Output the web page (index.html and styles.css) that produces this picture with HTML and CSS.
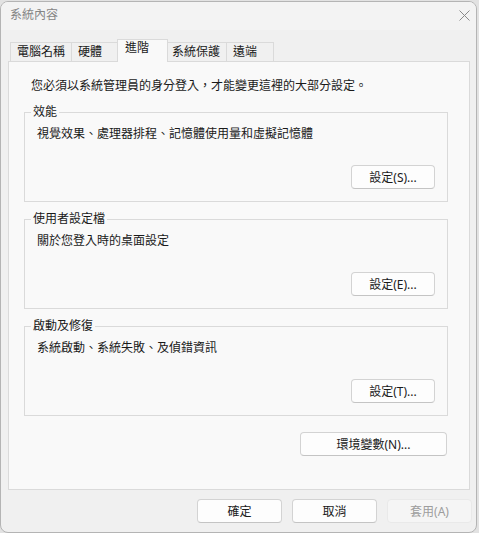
FILE: index.html
```html
<!DOCTYPE html>
<html lang="zh-Hant">
<head>
  <meta charset="UTF-8">
  <title>系統內容</title>
  <link rel="stylesheet" href="styles.css">
</head>
<body>
  <div class="window">
    <div class="titlebar">
      <span class="title">系統內容</span>
      <svg class="close" width="11" height="11" viewBox="0 0 11 11">
        <path d="M0.5 0.5 L10.5 10.5 M10.5 0.5 L0.5 10.5" stroke="#8a8a8a" stroke-width="1" fill="none"/>
      </svg>
    </div>

    <div class="tabs">
      <div class="tab">電腦名稱</div>
      <div class="tab">硬體</div>
      <div class="tab active">進階</div>
      <div class="tab">系統保護</div>
      <div class="tab">遠端</div>
    </div>

    <div class="panel">
      <p class="intro">您必須以系統管理員的身分登入，才能變更這裡的大部分設定。</p>

      <!-- 效能 -->
      <fieldset class="group">
        <legend>效能</legend>
        <p class="desc">視覺效果、處理器排程、記憶體使用量和虛擬記憶體</p>
        <div class="actions"><button class="btn setting">設定(S)...</button></div>
      </fieldset>

      <!-- 使用者設定檔 -->
      <fieldset class="group">
        <legend>使用者設定檔</legend>
        <p class="desc">關於您登入時的桌面設定</p>
        <div class="actions"><button class="btn setting">設定(E)...</button></div>
      </fieldset>

      <!-- 啟動及修復 -->
      <fieldset class="group">
        <legend>啟動及修復</legend>
        <p class="desc">系統啟動、系統失敗、及偵錯資訊</p>
        <div class="actions"><button class="btn setting">設定(T)...</button></div>
      </fieldset>

      <div class="env">
        <button class="btn env-btn">環境變數(N)...</button>
      </div>
    </div>

    <div class="footer">
      <button class="btn dlg">確定</button>
      <button class="btn dlg">取消</button>
      <button class="btn dlg" disabled>套用(A)</button>
    </div>
  </div>
</body>
</html>
```

FILE: styles.css
```css
:root {
  --text: #1a1a1a;
  --border: #dadada;
  --panel-bg: #f9f9f9;
  --window-bg: #f0f0f0;
}
* { box-sizing: border-box; margin: 0; padding: 0; }
body {
  font-family: "Noto Sans", "Noto Sans CJK TC", sans-serif;
  font-size: 12px;
  line-height: 16px;
  color: var(--text);
  background-color: #e2e2e2;
}
.window {
  margin-top: 1px;
  width: 477px;
  height: 532px;
  border: 1px solid #b4b4b4;
  border-radius: 8px;
  background-color: var(--window-bg);
  display: flex;
  flex-direction: column;
  overflow: hidden;
}
.titlebar {
  height: 28px;
  padding: 0 6px 2px 9px;
  display: flex;
  align-items: center;
  justify-content: space-between;
  background-color: #f3f3f3;
}
.title {
  color: #858585;
}
.tabs {
  height: 22px;
  margin: 9px 6px 0 9px;
  display: flex;
  align-items: flex-end;
  position: relative;
  z-index: 1;
}
.tab {
  min-width: 47px;
  height: 19px;
  padding: 1px 6px 0;
  border: 1px solid var(--border);
  border-bottom: none;
  background-color: var(--window-bg);
  white-space: nowrap;
}
.tab + .tab {
  border-left: none;
}
.tab.active {
  min-width: 51px;
  height: 23px;
  margin: 0 -2px -1px;
  padding: 0 7px;
  border-left: 1px solid var(--border);
  background-color: var(--panel-bg);
  position: relative;
  z-index: 2;
}
.tab.active + .tab {
  border-left: none;
}
.panel {
  flex: 1;
  margin: 0 6px 0 7px;
  padding: 16px 21px 0 15px;
  border: 1px solid var(--border);
  background-color: var(--panel-bg);
}
.intro {
  margin-left: 7px;
}
.group {
  margin-top: 9px;
  padding: 0 12px 12px 6px;
  border: 1px solid var(--border);
}
.group:first-of-type {
  margin-top: 10px;
}
.group legend {
  padding: 0 2px;
  line-height: 16px;
}
.desc {
  margin-top: 6px;
  padding-left: 6px;
}
.actions {
  margin-top: 23px;
  display: flex;
  justify-content: flex-end;
}
.btn {
  height: 24px;
  font-family: inherit;
  font-size: 12px;
  color: var(--text);
  background-color: #fdfdfd;
  border: 1px solid #d3d3d3;
  border-bottom-color: #c4c4c4;
  border-radius: 4px;
}
.btn:disabled {
  color: #9d9d9d;
  background-color: #f5f5f5;
  border-color: #e9e9e9;
}
.setting {
  width: 84px;
}
.env {
  margin-top: 16px;
  margin-right: 1px;
  display: flex;
  justify-content: flex-end;
}
.env-btn {
  width: 147px;
}
.footer {
  height: 42px;
  padding: 9px 4px 0 0;
  display: flex;
  justify-content: flex-end;
  gap: 10px;
}
.dlg {
  width: 85px;
}
```
